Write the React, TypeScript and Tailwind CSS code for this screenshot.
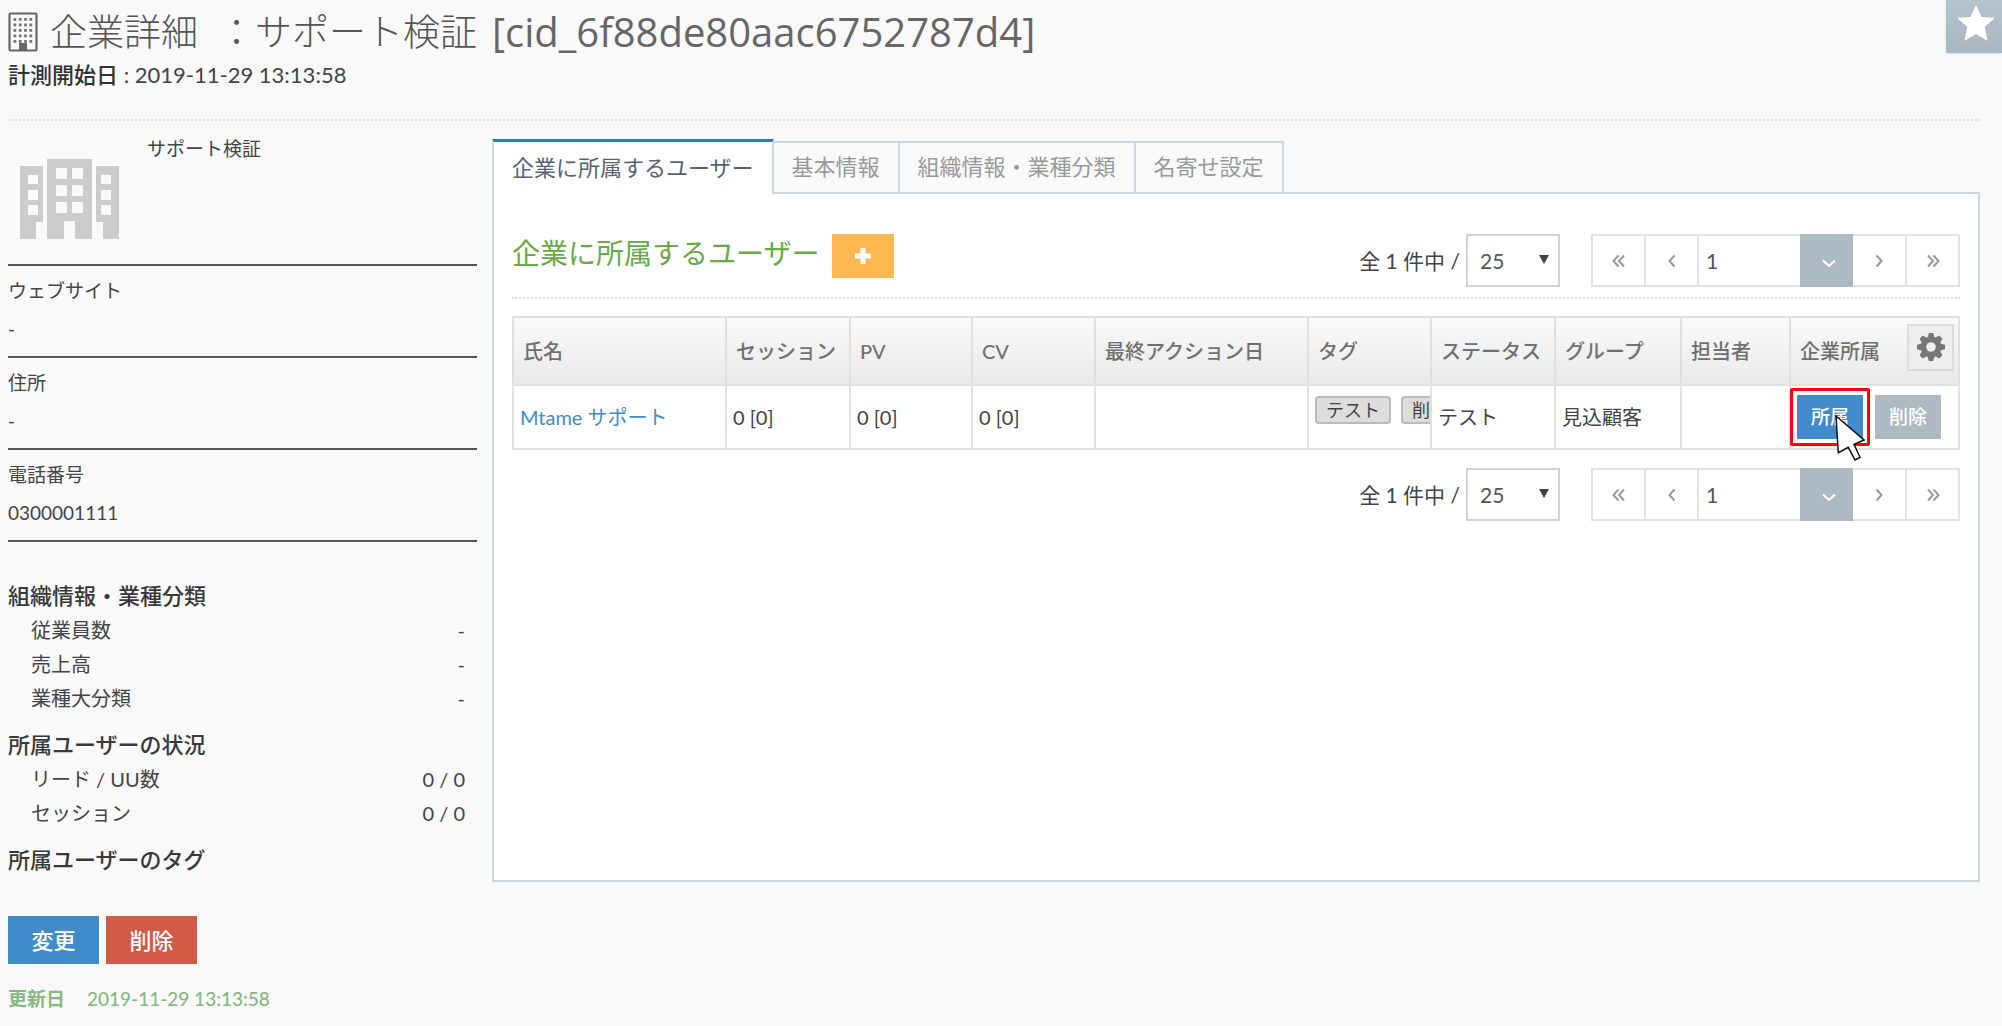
import { useState } from "react";
import type { ReactNode } from "react";

interface InfoItem {
  label: string;
  value: string;
}

interface Column {
  name: string;
  width: string;
}

const profile: InfoItem[] = [
  { label: "ウェブサイト", value: "-" },
  { label: "住所", value: "-" },
  { label: "電話番号", value: "0300001111" },
];

const summary: { title: string; items: InfoItem[] }[] = [
  {
    title: "組織情報・業種分類",
    items: [
      { label: "従業員数", value: "-" },
      { label: "売上高", value: "-" },
      { label: "業種大分類", value: "-" },
    ],
  },
  {
    title: "所属ユーザーの状況",
    items: [
      { label: "リード / UU数", value: "0 / 0" },
      { label: "セッション", value: "0 / 0" },
    ],
  },
  { title: "所属ユーザーのタグ", items: [] },
];

const tabs = ["企業に所属するユーザー", "基本情報", "組織情報・業種分類", "名寄せ設定"];

const columns: Column[] = [
  { name: "氏名", width: "w-[213px]" },
  { name: "セッション", width: "w-[124px]" },
  { name: "PV", width: "w-[122px]" },
  { name: "CV", width: "w-[123px]" },
  { name: "最終アクション日", width: "w-[213px]" },
  { name: "タグ", width: "w-[123px]" },
  { name: "ステータス", width: "w-[124px]" },
  { name: "グループ", width: "w-[126px]" },
  { name: "担当者", width: "w-[109px]" },
];

// Icons
function BuildingIcon() {
  return (
    <svg viewBox="0 0 30 40" className="w-[30px] h-10 shrink-0" aria-hidden="true">
      <rect x="1.5" y="1.5" width="27" height="37" rx="1" fill="none" stroke="#666" strokeWidth="2.2" />
      {[6, 11.5, 17, 22.5, 28].map((y) =>
        [5.5, 10.8, 16.1, 21.4].map((x) => <rect key={`${x}-${y}`} x={x} y={y} width="2.8" height="2.8" fill="#777" />)
      )}
      <rect x="11" y="31" width="8" height="7" fill="#666" />
    </svg>
  );
}

function CompanyIcon() {
  return (
    <svg viewBox="0 0 99 80" className="w-[99px] h-20" fill="#ccc" fillRule="evenodd" aria-hidden="true">
      <path d="M0 7h23v56h-7v17H0zM8 16v9h10v-9zM8 31v10h10v-10zM8 46v10h10v-10z" />
      <path d="M27 0h45v80H55V62H44v18H27zM36 9v11h11V9zM52 9v11h11V9zM36 26v11h11V26zM52 26v11h11V26zM36 43v11h11V43zM52 43v11h11V43z" />
      <path d="M76 7h23v73H83V63h-7zM81 16v9h10v-9zM81 31v10h10v-10zM81 46v10h10v-10z" />
    </svg>
  );
}

function GearIcon() {
  return (
    <svg viewBox="-14 -14 28 28" className="w-7 h-7" fill="#777" aria-hidden="true">
      {[0, 45, 90, 135].map((a) => (
        <path key={a} transform={`rotate(${a})`} d="M-2.2 -14h4.4l1.4 5h-7.2zM-2.2 14h4.4l1.4 -5h-7.2z" />
      ))}
      <circle r="7.6" fill="none" stroke="#777" strokeWidth="5.6" />
    </svg>
  );
}

function Chevron({ d, className = "text-[#999]" }: { d: string; className?: string }) {
  return (
    <svg viewBox="0 0 16 16" className={`w-4 h-4 ${className}`} fill="none" stroke="currentColor" strokeWidth="2" aria-hidden="true">
      <path d={d} />
    </svg>
  );
}

function PageButton({ label, children }: { label: string; children: ReactNode }) {
  return (
    <button type="button" aria-label={label} className="flex w-[53px] items-center justify-center border-l-2 border-[#e2e2e2] first:w-[51px] first:border-l-0">
      {children}
    </button>
  );
}

function Pagination({ id }: { id: string }) {
  const [limit, setLimit] = useState("25");
  const [page, setPage] = useState("1");

  return (
    <div className="flex items-center">
      <label htmlFor={`limit-${id}`} className="mr-[6px] text-[21px] text-[#444]">
        全 1 件中 /
      </label>
      <div className="relative">
        <select
          id={`limit-${id}`}
          value={limit}
          onChange={(e) => setLimit(e.target.value)}
          className="h-[53px] w-[94px] appearance-none border-2 border-[#d2d2d2] bg-white pl-3 text-[21px] text-[#555]"
        >
          <option value="25">25</option>
          <option value="50">50</option>
          <option value="100">100</option>
        </select>
        <svg viewBox="0 0 10 9" className="pointer-events-none absolute right-[11px] top-[21px] h-[9px] w-[10px]" fill="#444" aria-hidden="true">
          <path d="M0 0h10L5 9z" />
        </svg>
      </div>
      <div className="ml-[31px] flex h-[53px] border-2 border-[#e2e2e2] bg-white">
        <PageButton label="最初のページ">
          <Chevron d="M7.5 2.5 2.5 8l5 5.5M13 2.5 8 8l5 5.5" />
        </PageButton>
        <PageButton label="前のページ">
          <Chevron d="M10.5 2.5 5.5 8l5 5.5" />
        </PageButton>
        <input
          aria-label="ページ"
          value={page}
          onChange={(e) => setPage(e.target.value)}
          className="w-[103px] border-l-2 border-[#e2e2e2] px-[7px] text-[21px] text-[#555]"
        />
        <button type="button" aria-label="ページを選択" className="-my-[2px] flex w-[53px] items-center justify-center bg-[#abbac3] pl-1 pt-1">
          <Chevron d="M2 5.5 8 11l6-5.5" className="text-white" />
        </button>
        <button type="button" aria-label="次のページ" className="flex w-[52px] items-center justify-center">
          <Chevron d="M5.5 2.5 10.5 8l-5 5.5" />
        </button>
        <PageButton label="最後のページ">
          <Chevron d="M3 2.5 8 8l-5 5.5M8.5 2.5 13.5 8l-5 5.5" />
        </PageButton>
      </div>
    </div>
  );
}

function Sidebar() {
  return (
    <aside className="w-[469px] shrink-0">
      <div className="flex h-[145px] gap-7 border-b-2 border-[#555] pl-3">
        <div className="pt-[38px]">
          <CompanyIcon />
        </div>
        <p className="pt-[14px] text-[19px] leading-7">サポート検証</p>
      </div>

      <dl>
        {profile.map((item) => (
          <div key={item.label} className="h-[92px] border-b-2 border-[#555] pt-[6px] text-[19px] leading-[38px]">
            <dt>{item.label}</dt>
            <dd>{item.value}</dd>
          </div>
        ))}
      </dl>

      <div className="flex flex-col gap-[13px] pt-[37px] leading-[34px]">
        {summary.map((group) => (
          <section key={group.title}>
            <h2 className="text-[22px] font-medium text-[#393939]">{group.title}</h2>
            <dl className="pl-[23px] pr-3 text-[20px]">
              {group.items.map((item) => (
                <div key={item.label} className="flex justify-between">
                  <dt>{item.label}</dt>
                  <dd>{item.value}</dd>
                </div>
              ))}
            </dl>
          </section>
        ))}
      </div>

      <div className="mt-[39px] flex gap-[7px] text-[22px] font-medium text-white">
        <button type="button" className="h-12 w-[91px] bg-[#428bca]">変更</button>
        <button type="button" className="h-12 w-[91px] bg-[#d15b47]">削除</button>
      </div>
      <p className="mt-[21px] flex gap-[22px] text-[19px] leading-7 text-[#87b87f]">
        <span className="font-bold">更新日</span>
        <span className="font-medium">2019-11-29 13:13:58</span>
      </p>
    </aside>
  );
}

function UserTable() {
  return (
    <table className="w-full table-fixed border-collapse text-left text-[20px]">
      <colgroup>
        {columns.map((c) => (
          <col key={c.name} className={c.width} />
        ))}
        <col />
      </colgroup>
      <thead>
        <tr className="h-[68px] bg-linear-to-b from-[#fafafa] to-[#e9e9e9] text-[#707070]">
          {columns.map((c) => (
            <th key={c.name} className="whitespace-nowrap border-2 border-[#e0e0e0] pl-[9px] font-medium">
              {c.name}
            </th>
          ))}
          <th className="border-2 border-[#e0e0e0] pl-[9px] pr-1 font-medium">
            <div className="flex items-center justify-between">
              企業所属
              <button type="button" aria-label="表示設定" className="mb-2 flex h-[47px] w-[47px] items-center justify-center border-2 border-[#ddd] bg-[#eee]">
                <GearIcon />
              </button>
            </div>
          </th>
        </tr>
      </thead>
      <tbody>
        <tr className="h-16">
          <td className="border-2 border-[#e0e0e0] pl-[6px]">
            <a href="#user" className="text-[#428bca]">Mtame サポート</a>
          </td>
          <td className="border-2 border-[#e0e0e0] pl-[6px]">0 [0]</td>
          <td className="border-2 border-[#e0e0e0] pl-[6px]">0 [0]</td>
          <td className="border-2 border-[#e0e0e0] pl-[6px]">0 [0]</td>
          <td className="border-2 border-[#e0e0e0]"></td>
          <td className="overflow-hidden border-2 border-[#e0e0e0] pl-[6px] align-top">
            <div className="mt-[10px] flex gap-[10px] text-[18px]">
              <span className="flex h-7 shrink-0 items-center rounded-[4px] border-2 border-[#bbb] bg-[#ddd] px-[9px]">テスト</span>
              <span className="flex h-7 flex-1 items-center rounded-l-[4px] border-2 border-r-0 border-[#bbb] bg-[#ddd] pl-[9px]">削</span>
            </div>
          </td>
          <td className="border-2 border-[#e0e0e0] pl-[6px]">テスト</td>
          <td className="border-2 border-[#e0e0e0] pl-[6px]">見込顧客</td>
          <td className="border-2 border-[#e0e0e0]"></td>
          <td className="border-2 border-[#e0e0e0]">
            <div className="flex items-center gap-[5px] text-[19px] font-medium text-white">
              <div className="relative -ml-px rounded-[2px] border-[3px] border-[#ff0010] p-1">
                <button type="button" className="block h-11 w-[66px] bg-[#428bca]">所属</button>
                <svg viewBox="0 0 30 46" className="absolute left-[42px] top-6 h-[46px] w-[30px]" fill="#fff" stroke="#111" strokeWidth="1.5" aria-hidden="true">
                  <path d="M1 1 29 25 19 29.3 25 42.3 20 45 13.3 32.3 3.3 37.7z" />
                </svg>
              </div>
              <button type="button" className="h-11 w-[66px] bg-[#abbac3]">削除</button>
            </div>
          </td>
        </tr>
      </tbody>
    </table>
  );
}

export default function App() {
  const [active, setActive] = useState(0);

  return (
    <div className="min-h-screen w-full overflow-hidden bg-[#f9f9f9] font-[Lato,'Noto_Sans_CJK_JP',sans-serif] text-[#444]">
      <header className="flex justify-between pl-2">
        <div className="pt-2">
          <h1 className="flex items-center text-[37px] leading-[48px] font-light text-[#555] font-['Open_Sans','Noto_Sans_CJK_JP',sans-serif]">
            <BuildingIcon />
            <span className="ml-3">企業詳細</span>
            <span className="ml-5">：サポート検証</span>
            <span className="ml-[15px] text-[40px] font-normal text-[#666]">[cid_6f88de80aac6752787d4]</span>
          </h1>
          <p className="text-[22px] leading-[38px]">
            <span className="font-medium text-[#333]">計測開始日</span> : 2019-11-29 13:13:58
          </p>
        </div>
        <button
          type="button"
          aria-label="お気に入り"
          className="flex h-[53px] w-14 justify-center bg-linear-to-b from-[#b5c3ce] to-[#a8b7c0] pl-1 pt-[5px] shadow-sm"
        >
          <svg viewBox="0 0 36 36" className="h-9 w-9" fill="#fff" stroke="#fff" strokeWidth="1.5" strokeLinejoin="round" aria-hidden="true">
            <path d="M18 1.5 22.8 12.4 35 13.6 25.8 21.8 28.7 34.5 18 28.2 7.3 34.5 10.2 21.8 1 13.6 13.2 12.4z" />
          </svg>
        </button>
      </header>

      <div className="ml-2 mr-[22px] mt-[25px] border-b-2 border-dotted border-[#e2e2e2]" />

      <div className="flex gap-[15px] pl-2 pr-[22px]">
        <Sidebar />

        <main className="min-w-0 flex-1 pt-[18px]">
          <div role="tablist" className="flex items-end text-[22px]">
            {tabs.map((tab, i) => (
              <button
                key={tab}
                type="button"
                role="tab"
                aria-selected={active === i}
                onClick={() => setActive(i)}
                className={
                  active === i
                    ? "relative -mb-[2px] h-[55px] border-x-2 border-t-[3px] border-x-[#ccd7e2] border-t-[#2f7fb8] bg-white px-[18px] pb-[2px] text-[#576373]"
                    : "h-[51px] border-r-2 border-t-2 border-[#ccd7e2] bg-[#f9f9f9] px-[18px] pb-[2px] text-[#999]"
                }
              >
                {tab}
              </button>
            ))}
          </div>

          <section className="min-h-[690px] border-2 border-[#ccd7e2] bg-white px-[18px] pt-10">
            <div className="flex h-[65px] items-start justify-between border-b-2 border-dotted border-[#e2e2e2]">
              <div className="flex items-start gap-[13px]">
                <h2 className="text-[28px] leading-[38px] text-[#69aa46]">企業に所属するユーザー</h2>
                <button type="button" aria-label="追加" className="flex h-11 w-[62px] items-center justify-center bg-[#ffb752]">
                  <svg viewBox="0 0 16 16" className="h-4 w-4" fill="#fff" aria-hidden="true">
                    <path d="M5.5 0h5v5.5H16v5h-5.5V16h-5v-5.5H0v-5h5.500z" />
                  </svg>
                </button>
              </div>
              <Pagination id="top" />
            </div>
            <div className="pb-[18px] pt-[17px]">
              <UserTable />
            </div>
            <div className="flex justify-end">
              <Pagination id="bottom" />
            </div>
          </section>
        </main>
      </div>
    </div>
  );
}
